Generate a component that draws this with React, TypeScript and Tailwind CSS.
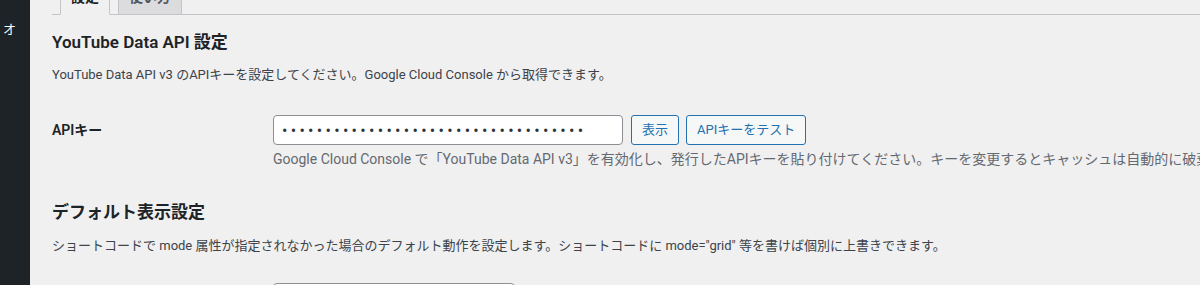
import React from 'react';

const font = { fontFamily: 'Roboto, "Noto Sans CJK JP", sans-serif' };

export default function App() {
  return (
    <div className="flex h-[285px] overflow-hidden bg-[#f0f0f1] text-[#3c434a]" style={font}>
      {/* Admin menu (clipped) */}
      <aside className="w-[30px] shrink-0 bg-[#1d2327] text-white">
        <div className="pt-[21px] pl-[3px] text-[13px] leading-[18px]">オ</div>
      </aside>

      <main className="flex-1 min-w-0 pl-[22px]">
        {/* Tabs */}
        <div className="-mt-[21px] flex items-end border-b border-[#c3c4c7] pl-[8px]">
          <div className="-mb-px border border-[#c3c4c7] border-b-[#f0f0f1] bg-[#f0f0f1] px-[10px] py-[5px] text-[14px] leading-[24px] font-semibold text-[#1d2327]">
            設定
          </div>
          <div className="ml-[8px] -mb-px border border-[#c3c4c7] bg-[#dcdcde] px-[10px] py-[5px] text-[14px] leading-[24px] font-semibold text-[#50575e]">
            使い方
          </div>
        </div>

        {/* YouTube Data API section */}
        <h2 className="mt-[15px] text-[17px] leading-[24px] font-semibold text-[#1d2327]">YouTube Data API 設定</h2>
        <p className="mt-[11px] text-[13px] leading-[20px]">
          YouTube Data API v3 のAPIキーを設定してください。Google Cloud Console から取得できます。
        </p>

        <div className="mt-[30px] flex">
          <div className="w-[221px] shrink-0 flex h-[30px] items-center text-[14px] font-semibold text-[#1d2327]">APIキー</div>
          <div className="min-w-0 flex-1">
            <div className="flex items-center">
              <input
                type="text"
                readOnly
                value={'•'.repeat(35)}
                className="h-[30px] w-[350px] rounded-[4px] border border-[#8c8f94] bg-white px-[8px] text-[16px] tracking-[3.3px] text-[#2c3338] outline-none"
                style={font}
              />
              <button className="ml-[8px] h-[30px] rounded-[3px] border border-[#2271b1] bg-[#f6f7f7] px-[10px] text-[13px] text-[#2271b1]">
                表示
              </button>
              <button className="ml-[7px] h-[30px] rounded-[3px] border border-[#2271b1] bg-[#f6f7f7] px-[10px] text-[13px] text-[#2271b1]">
                APIキーをテスト
              </button>
            </div>
            <p className="mt-[4px] whitespace-nowrap text-[14px] leading-[21px] text-[#646970]">
              Google Cloud Console で「YouTube Data API v3」を有効化し、発行したAPIキーを貼り付けてください。キーを変更するとキャッシュは自動的に破棄されます。
            </p>
          </div>
        </div>

        {/* Default display section */}
        <h2 className="mt-[30px] text-[17px] leading-[24px] font-semibold text-[#1d2327]">デフォルト表示設定</h2>
        <p className="mt-[12px] text-[13px] leading-[20px]">
          ショートコードで mode 属性が指定されなかった場合のデフォルト動作を設定します。ショートコードに mode="grid" 等を書けば個別に上書きできます。
        </p>

        <div className="mt-[27px] flex">
          <div className="w-[221px] shrink-0" />
          <div className="h-[30px] w-[242px] rounded-[4px] border border-[#8c8f94] bg-white" />
        </div>
      </main>
    </div>
  );
}
